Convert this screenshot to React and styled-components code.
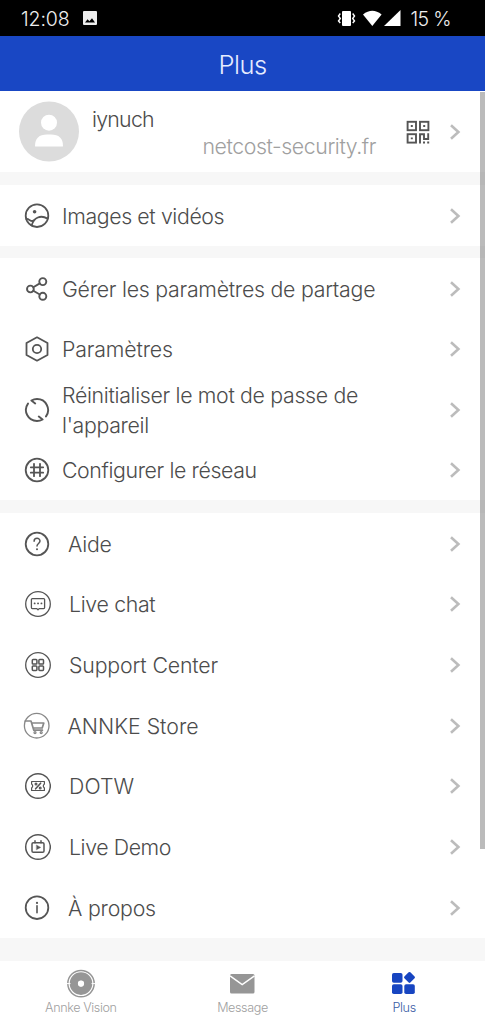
import React from "react";
import styled, { createGlobalStyle } from "styled-components";

const GlobalStyle = createGlobalStyle`
  * { box-sizing: border-box; }
  body { margin: 0; background: #fff; overflow: hidden; }
  svg { display: block; flex: none; }
`;

const Screen = styled.div`
  position: relative;
  width: 485px;
  height: 1024px;
  display: flex;
  flex-direction: column;
  background: #f7f7f7;
  color: #4c4c4c;
  font-family: Inter, "Liberation Sans", sans-serif;
  font-weight: 300;
`;

const StatusBar = styled.div`
  flex: none;
  height: 36px;
  display: flex;
  align-items: center;
  padding: 0 34px 0 21px;
  background: #000;
  color: #eee;
`;

const StatusText = styled.span`
  padding-top: 1px;
  font-size: 19.5px;
  line-height: 24px;
  white-space: pre;
  letter-spacing: ${(p) => p.$tracking || 0}px;
`;

const StatusIcons = styled.div`
  display: flex;
  align-items: center;
  margin-left: auto;
  margin-right: 9px;
`;

const Header = styled.header`
  flex: none;
  height: 55px;
  display: flex;
  align-items: center;
  justify-content: center;
  padding-top: 2px;
  background: #1947c4;
  color: #e6ecff;
  font-size: 25.5px;
  letter-spacing: -0.5px;
`;

const Profile = styled.section`
  flex: none;
  height: 81px;
  display: flex;
  align-items: center;
  padding: 0 23px 0 19px;
  background: #fff;
`;

const Identity = styled.div`
  align-self: stretch;
  display: flex;
  flex-direction: column;
  flex: 1;
  padding: 15px 30px 0 13px;
`;

const UserName = styled.span`
  font-size: 21.3px;
  line-height: 27px;
  letter-spacing: -0.75px;
`;

const Site = styled.span`
  align-self: flex-end;
  font-size: 21.3px;
  line-height: 27px;
  color: #a0a0a0;
  white-space: nowrap;
  letter-spacing: -0.42px;
`;

const Group = styled.section`
  flex: none;
  height: ${(p) => p.$height}px;
  margin-top: ${(p) => p.$gap}px;
  padding-top: ${(p) => p.$inset}px;
  display: flex;
  flex-direction: column;
  background: #fff;
`;

const Row = styled.div`
  flex: 1;
  min-height: 0;
  display: flex;
  align-items: center;
  padding: 0 23px;
`;

const Label = styled.span`
  flex: 1;
  margin-left: ${(p) => p.$indent}px;
  font-size: 21.3px;
  line-height: 30px;
  white-space: pre;
  letter-spacing: ${(p) => p.$tracking}px;
`;

const TabBar = styled.nav`
  flex: none;
  height: 63px;
  margin-top: auto;
  display: grid;
  grid-template-columns: repeat(3, 1fr);
  background: #fff;
`;

const Tab = styled.div`
  display: flex;
  flex-direction: column;
  align-items: center;
  padding-top: 8px;
  font-size: 12.6px;
  line-height: 18px;
  color: ${(p) => (p.$active ? "#3a5ba5" : "#a0a0a0")};
`;

const TabLabel = styled.span`
  letter-spacing: ${(p) => p.$tracking || 0}px;
`;

const ScrollThumb = styled.div`
  position: absolute;
  right: 0;
  top: 92px;
  width: 5px;
  height: 757px;
  background: rgba(120, 120, 120, 0.5);
`;

const Icon = ({ children, width = 1.8, color = "#555", size = 28 }) => (
  <svg width={size} height={size} viewBox="0 0 28 28" fill="none" stroke={color}
    strokeWidth={width} strokeLinecap="round" strokeLinejoin="round">
    {children}
  </svg>
);

const Chevron = () => (
  <svg width="14" height="18" viewBox="0 0 14 18" fill="none" stroke="#bcbcbc" strokeWidth="2.6">
    <path d="M3 2.3 L10.4 9 L3 15.7" />
  </svg>
);

const icons = {
  media: (
    <Icon>
      <circle cx="14" cy="13.7" r="11.3" />
      <circle cx="11.6" cy="9.7" r="1.8" fill="#555" stroke="none" />
      <path d="M3.4 17 C5.4 16.4 7 19 9.2 19 C10.4 19 11 18.4 11.4 17.8 M8.6 23.4 C11 15.5 17.5 12.5 24.6 16.6" />
    </Icon>
  ),
  share: (
    <Icon width={1.9}>
      <circle cx="7.4" cy="14" r="3.4" />
      <circle cx="19.8" cy="6.6" r="3.5" />
      <circle cx="19.8" cy="21.3" r="3.5" />
      <path d="M10.3 12.3 L16.8 8.4 M10.3 15.7 L16.8 19.5" />
    </Icon>
  ),
  settings: (
    <Icon>
      <path d="M14 2.3 L24.5 8 V20 L14 25.7 L3.5 20 V8 Z" />
      <circle cx="14" cy="14" r="4.2" />
    </Icon>
  ),
  reset: (
    <Icon width={1.9}>
      <path d="M5 7.6 A11 11 0 0 0 14 25 C16 25 18 24.4 19.6 23.5 L15.8 20.6" />
      <path d="M23 20.4 A11 11 0 0 0 14 3 C12 3 10 3.6 8.4 4.5 L12.2 7.4" />
    </Icon>
  ),
  network: (
    <Icon>
      <circle cx="14" cy="14" r="11.3" />
      <path d="M11 7.8 V20.2 M17 7.8 V20.2 M7.8 11.3 H20.2 M7.8 16.7 H20.2" />
    </Icon>
  ),
  help: (
    <Icon>
      <circle cx="14" cy="14" r="11.3" />
      <path d="M11.1 11.3 C11.1 7.4 17 7.4 17 11.1 C17 13.5 14 13.5 14 16.1" strokeWidth="1.5" />
      <circle cx="14" cy="19.2" r="1" fill="#555" stroke="none" />
    </Icon>
  ),
  chat: (
    <Icon width={1.3}>
      <circle cx="15" cy="14" r="12.3" />
      <path d="M9.3 8.6 H20.7 Q21.6 8.6 21.6 9.6 V17.6 Q21.6 18.6 20.7 18.6 H16.2 L15 19.8 L13.8 18.6 H9.3 Q8.4 18.6 8.4 17.6 V9.6 Q8.4 8.6 9.3 8.6 Z" />
      <path d="M11.6 13.4 h.1 M15 13.4 h.1 M18.4 13.4 h.1" strokeWidth="1.8" />
    </Icon>
  ),
  support: (
    <Icon width={1.5}>
      <circle cx="15" cy="14" r="12.3" strokeWidth="1.3" />
      <rect x="9.3" y="8.6" width="4.6" height="4.4" rx=".8" />
      <rect x="15.9" y="8.6" width="4.6" height="4.4" rx=".8" />
      <rect x="9.3" y="15" width="4.6" height="4.4" rx=".8" />
      <rect x="15.9" y="15" width="4.6" height="4.4" rx=".8" />
    </Icon>
  ),
  store: (
    <Icon width={1.3} color="#888">
      <circle cx="13.7" cy="13.7" r="12.3" />
      <path d="M2.2 9 H8 L10.8 18.2 H19.4 M8.7 11 H20.8 L19.2 16 H10.4" strokeWidth="1.7" />
      <circle cx="12" cy="20.6" r="1" />
      <circle cx="18.2" cy="20.6" r="1" />
    </Icon>
  ),
  deal: (
    <Icon width={1.2}>
      <circle cx="15" cy="14" r="12.3" strokeWidth="1.5" />
      <path d="M8.6 9.5 H21.4 V12 Q19.2 14 21.4 16 V18.5 H8.6 V16 Q10.8 14 8.6 12 Z" />
      <path d="M17.6 11.2 L12.6 16.8" strokeWidth="1.6" />
      <circle cx="13" cy="12" r=".9" />
      <circle cx="17.2" cy="16" r=".9" />
    </Icon>
  ),
  demo: (
    <Icon width={1.5}>
      <circle cx="15" cy="14" r="12.3" />
      <rect x="9" y="9.7" width="12" height="9.5" rx="1.3" />
      <path d="M12 7.8 V9.7 M18 7.8 V9.7" />
      <path d="M13.7 12.2 L17.6 14.4 L13.7 16.6 Z" fill="#555" strokeWidth=".5" />
    </Icon>
  ),
  about: (
    <Icon>
      <circle cx="14" cy="13.7" r="11.3" />
      <path d="M14 11.8 V18.8" strokeWidth="1.6" />
      <circle cx="14" cy="8.9" r="1.1" fill="#555" stroke="none" />
    </Icon>
  ),
};

const groups = [
  { height: 61, gap: 13, inset: 0, rows: [["media", "Images et vidéos", 11, -0.38]] },
  {
    height: 242, gap: 12, inset: 1, rows: [
      ["share", "Gérer les paramètres de partage", 11, -0.25],
      ["settings", "Paramètres", 11, -0.15],
      ["reset", "Réinitialiser le mot de passe de\nl'appareil", 11, -0.32],
      ["network", "Configurer le réseau", 11, -0.38],
    ],
  },
  {
    height: 425, gap: 13, inset: 0.5, rows: [
      ["help", "Aide", 17, -0.2],
      ["chat", "Live chat", 18, -0.32],
      ["support", "Support Center", 18, -0.15],
      ["store", "ANNKE Store", 16.5, 0],
      ["deal", "DOTW", 18, 0.1],
      ["demo", "Live Demo", 18, -0.4],
      ["about", "À propos", 17, -0.2],
    ],
  },
];

const PictureIcon = () => (
  <svg width="16" height="16" viewBox="0 0 16 16">
    <path fill="#eee" fillRule="evenodd" d="M2 1 H14 Q15 1 15 2 V14 Q15 15 14 15 H2 Q1 15 1 14 V2 Q1 1 2 1 Z M3 12.5 H13 L10 8.3 L7.4 11.2 L5.6 9.2 Z" />
  </svg>
);

const PictureSlot = styled.div`
  margin-left: 12px;
`;

const StatusGlyphs = () => (
  <svg width="64" height="20" viewBox="0 0 64 20" fill="#fff">
    <rect x="5" y="3" width="9" height="15" rx="1" />
    <path d="M3.3 5.5 L1.5 8 L3.3 10.5 L1.5 13 L3.3 15 M15.7 5.5 L17.5 8 L15.7 10.5 L17.5 13 L15.7 15" fill="none" stroke="#fff" strokeWidth="1.4" />
    <path d="M26 6.5 Q35.3 -1 44.6 6.5 L35.3 18 Z" />
    <path d="M47 18 L63.5 2 V18 Z" />
  </svg>
);

const Avatar = () => (
  <svg width="60" height="61" viewBox="0 0 60 61">
    <circle cx="30" cy="30.5" r="30" fill="#dcdcdc" />
    <circle cx="30" cy="21.7" r="8" fill="#fff" />
    <path d="M16 45 Q16 33.5 28 33.5 H32 Q44 33.5 44 45 Q44 45.5 43.5 45.5 H16.5 Q16 45.5 16 45 Z" fill="#fff" />
  </svg>
);

const CodeSlot = styled.div`
  margin-right: 18px;
`;

const QrCode = () => (
  <svg width="24" height="24" viewBox="0 0 24 24" fill="none" stroke="#555" strokeWidth="1.9">
    <rect x="1.6" y="1.8" width="8.4" height="8.4" />
    <rect x="14" y="1.8" width="8.4" height="8.4" />
    <rect x="1.6" y="14.2" width="8.4" height="8.4" />
    <path d="M4.8 6 h2 M17.2 6 h2 M4.8 18.4 h2 M14 23.4 V14.2 H18 V19 H22.2 M22.2 13.2 V20 M17 22.5 H19 M21.2 22.5 H23.2" />
  </svg>
);

const VisionIcon = () => (
  <svg width="30" height="30" viewBox="0 0 30 30" fill="none" stroke="#969696">
    <circle cx="15" cy="14.6" r="13.2" strokeWidth="1.5" />
    <circle cx="15" cy="14.6" r="7.2" strokeWidth="8.2" />
    <path d="M0 14.6 H4.5 M25.5 14.6 H30" stroke="#fff" strokeWidth="1" />
    <circle cx="15" cy="14.6" r="2.9" fill="#fff" stroke="none" />
  </svg>
);

const MailIcon = () => (
  <svg width="30" height="30" viewBox="0 0 30 30">
    <rect x="3" y="5" width="24.5" height="19.5" rx="1.5" fill="#969696" />
    <path d="M3 6.9 L15.2 15.5 L27.5 6.9" fill="none" stroke="#fff" strokeWidth="1.5" />
  </svg>
);

const MoreIcon = () => (
  <svg width="30" height="30" viewBox="0 0 30 30" fill="#1745c1">
    <rect x="3" y="4" width="10.5" height="9.8" rx="1.8" />
    <rect x="3" y="15.3" width="10.5" height="9.8" rx="1.8" />
    <rect x="15.3" y="15.3" width="10.5" height="9.8" rx="1.8" />
    <rect x="16.3" y="4.2" width="8.4" height="8.4" rx="1.2" transform="rotate(45 20.5 8.4)" />
  </svg>
);

export default function App() {
  return (
    <Screen>
      <GlobalStyle />
      <StatusBar>
        <StatusText $tracking={-0.1}>12:08</StatusText>
        <PictureSlot><PictureIcon /></PictureSlot>
        <StatusIcons><StatusGlyphs /></StatusIcons>
        <StatusText $tracking={-0.6}>15 %</StatusText>
      </StatusBar>
      <Header>Plus</Header>
      <Profile>
        <Avatar />
        <Identity>
          <UserName>iynuch</UserName>
          <Site>netcost-security.fr</Site>
        </Identity>
        <CodeSlot><QrCode /></CodeSlot>
        <Chevron />
      </Profile>
      {groups.map((group) => (
        <Group key={group.rows[0][0]} $height={group.height} $gap={group.gap} $inset={group.inset}>
          {group.rows.map(([icon, text, indent, tracking]) => (
            <Row key={icon}>
              {icons[icon]}
              <Label $indent={indent} $tracking={tracking}>{text}</Label>
              <Chevron />
            </Row>
          ))}
        </Group>
      ))}
      <TabBar>
        <Tab><VisionIcon /><TabLabel $tracking={-0.4}>Annke Vision</TabLabel></Tab>
        <Tab><MailIcon /><TabLabel $tracking={-0.4}>Message</TabLabel></Tab>
        <Tab $active><MoreIcon /><TabLabel $tracking={-0.3}>Plus</TabLabel></Tab>
      </TabBar>
      <ScrollThumb />
    </Screen>
  );
}
